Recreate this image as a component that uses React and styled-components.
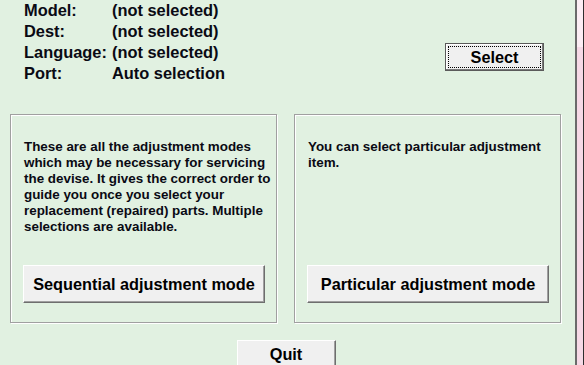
import React from "react";
import styled, { createGlobalStyle } from "styled-components";

const GlobalStyle = createGlobalStyle`
  html, body {
    margin: 0;
    padding: 0;
    background: #e1f1e1;
    overflow: hidden;
  }
  body {
    font-family: "Liberation Sans", Arial, sans-serif;
    color: #000;
  }
`;

const Window = styled.div`
  display: flex;
  width: 584px;
  height: 365px;
  overflow: hidden;
`;

const Main = styled.div`
  width: 576px;
  display: flex;
  flex-direction: column;
  background: #e1f1e1;
  & > * {
    flex-shrink: 0;
  }
`;

const Strip = styled.div`
  width: 6px;
  border-left: 2px solid #6a6a6a;
  border-right: 1px solid #2e2e2e;
  background: linear-gradient(#fcedf4 0, #fcedf4 47px, #f6d9e6 47px);
`;

const Top = styled.div`
  display: flex;
  justify-content: space-between;
  align-items: flex-start;
  height: 114px;
  padding-left: 24px;
  padding-right: 31px;
  box-sizing: border-box;
`;

const Info = styled.div`
  display: grid;
  grid-template-columns: 88px auto;
  font-size: 16.4px;
  font-weight: bold;
  line-height: 21px;
  color: #0a0a14;
`;

const Button = styled.button`
  font-family: "Liberation Sans", Arial, sans-serif;
  font-weight: bold;
  font-size: 16.3px;
  color: #000;
  background: #f0f0f0;
  border: 1px solid;
  border-color: #fff #6e6e6e #6e6e6e #fff;
  box-shadow: inset -1px -1px 0 #a0a0a0;
  width: ${(p) => p.$width || 99}px;
  height: ${(p) => p.$height || 38}px;
  padding: 0;
  cursor: pointer;
`;

const DefaultButton = styled(Button)`
  border: 1px solid #5a5a5a;
  box-shadow: inset -1px -1px 0 #7a7a7a, inset 1px 1px 0 #fff;
  outline: 1px dotted #000;
  outline-offset: -4px;
  margin-top: 43px;
`;

const Panels = styled.div`
  display: flex;
  gap: 17px;
  padding-left: 10px;
`;

const Panel = styled.div`
  width: 267px;
  height: 209px;
  box-sizing: border-box;
  border: 1px solid #a0a0a0;
  box-shadow: 1px 1px 0 #fff, inset 1px 1px 0 #fff;
  display: flex;
  flex-direction: column;
  padding: 24px 0 19px 12px;
`;

const Text = styled.p`
  margin: 0 0 0 1px;
  font-size: 13.4px;
  font-weight: bold;
  line-height: 16px;
  white-space: nowrap;
  color: #0a0a14;
`;

const PanelButton = styled(Button)`
  margin-top: auto;
  width: 242px;
`;

const Bottom = styled.div`
  display: flex;
  justify-content: center;
  padding-top: 17px;
  padding-right: 3px;
`;

export default function App() {
  return (
    <>
      <GlobalStyle />
      <Window>
        <Main>
          <Top>
            <Info>
              <span>Model:</span>
              <span>(not selected)</span>
              <span>Dest:</span>
              <span>(not selected)</span>
              <span>Language:</span>
              <span>(not selected)</span>
              <span>Port:</span>
              <span>Auto selection</span>
            </Info>
            <DefaultButton $height={28}>Select</DefaultButton>
          </Top>
          <Panels>
            <Panel>
              <Text>
                These are all the adjustment modes
                <br />
                which may be necessary for servicing
                <br />
                the devise. It gives the correct order to
                <br />
                guide you once you select your
                <br />
                replacement (repaired) parts. Multiple
                <br />
                selections are available.
              </Text>
              <PanelButton>Sequential adjustment mode</PanelButton>
            </Panel>
            <Panel>
              <Text>
                You can select particular adjustment
                <br />
                item.
              </Text>
              <PanelButton>Particular adjustment mode</PanelButton>
            </Panel>
          </Panels>
          <Bottom>
            <Button $height={28}>Quit</Button>
          </Bottom>
        </Main>
        <Strip />
      </Window>
    </>
  );
}
